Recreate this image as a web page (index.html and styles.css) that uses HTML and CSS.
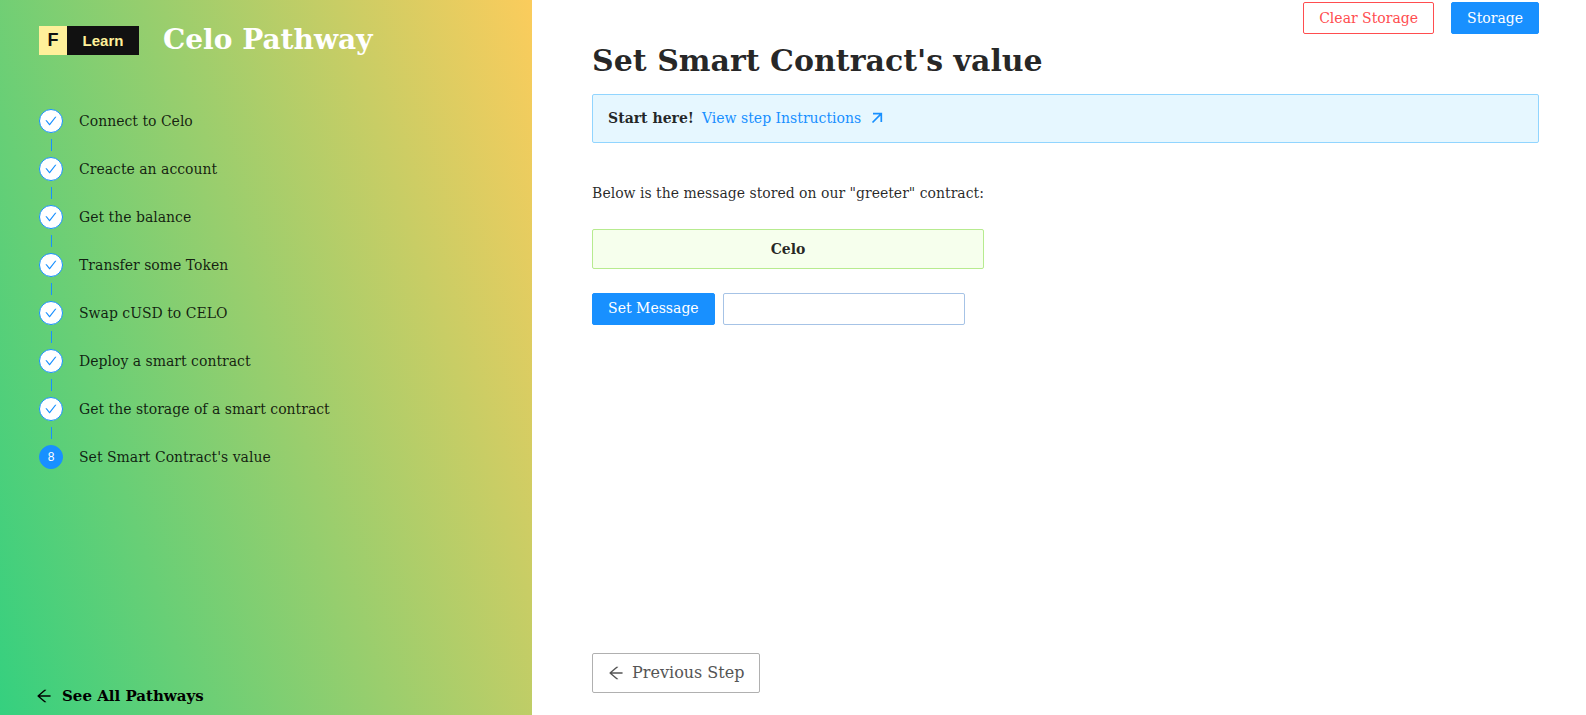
FILE: index.html
```html
<!DOCTYPE html>
<html lang="en">
<head>
<meta charset="utf-8">
<title>Celo Pathway</title>
<link rel="stylesheet" href="styles.css">
</head>
<body>
<svg class="sprite" aria-hidden="true">
  <symbol id="check" viewBox="64 64 896 896"><path d="M912 190h-69.900c-9.800 0-19.100 4.500-25.100 12.200L404.700 724.500 207 474a32 32 0 0 0-25.100-12.200H112c-6.700 0-10.400 7.700-6.300 12.900l273.900 347c12.800 16.200 37.400 16.200 50.300 0l488.400-618.900c4.100-5.100.4-12.800-6.300-12.800z"/></symbol>
  <symbol id="arrow-left" viewBox="64 64 896 896"><path d="M872 474H286.900l350.200-304c5.600-4.900 2.200-14-5.200-14h-88.500c-3.900 0-7.600 1.400-10.500 3.900L155 487.800a31.960 31.960 0 0 0 0 48.300L535.100 866c1.500 1.300 3.300 2 5.200 2h91.500c7.400 0 10.800-9.200 5.200-14L286.900 550H872c4.400 0 8-3.600 8-8v-60c0-4.400-3.600-8-8-8z"/></symbol>
  <symbol id="arrow-up-right" viewBox="0 0 14 14"><path d="M3 2.700H11.300V11M11.300 2.700L2.500 11.500" fill="none" stroke="currentColor" stroke-width="1.700"/></symbol>
</svg>
<div class="layout">
  <aside class="sidebar">
    <header class="brand">
      <div class="logo"><span class="logo-mark">F</span><span class="logo-word">Learn</span></div>
      <div class="brand-title">Celo Pathway</div>
    </header>
    <ol class="steps">
      <li class="step"><span class="step-icon"><svg class="check"><use href="#check"/></svg></span>Connect to Celo</li>
      <li class="step"><span class="step-icon"><svg class="check"><use href="#check"/></svg></span>Creacte an account</li>
      <li class="step"><span class="step-icon"><svg class="check"><use href="#check"/></svg></span>Get the balance</li>
      <li class="step"><span class="step-icon"><svg class="check"><use href="#check"/></svg></span>Transfer some Token</li>
      <li class="step"><span class="step-icon"><svg class="check"><use href="#check"/></svg></span>Swap cUSD to CELO</li>
      <li class="step"><span class="step-icon"><svg class="check"><use href="#check"/></svg></span>Deploy a smart contract</li>
      <li class="step"><span class="step-icon"><svg class="check"><use href="#check"/></svg></span>Get the storage of a smart contract</li>
      <li class="step" aria-current="step"><span class="step-icon step-icon-active">8</span>Set Smart Contract's value</li>
    </ol>
    <a class="all-pathways" href="#"><svg class="arrow"><use href="#arrow-left"/></svg>See All Pathways</a>
  </aside>
  <main class="content">
    <div class="toolbar">
      <button class="btn btn-danger" type="button">Clear Storage</button>
      <button class="btn btn-primary" type="button">Storage</button>
    </div>
    <h1 class="title">Set Smart Contract's value</h1>
    <div class="notice">
      <strong>Start here!</strong>
      <a class="notice-link" href="#">View step Instructions <svg class="link-icon"><use href="#arrow-up-right"/></svg></a>
    </div>
    <div class="greeting">
      <p class="greeting-text">Below is the message stored on our "greeter" contract:</p>
      <div class="greeting-value">Celo</div>
      <form class="message-form">
        <button class="btn btn-primary btn-submit" type="button">Set Message</button>
        <input class="message-input" type="text" aria-label="Message">
      </form>
    </div>
    <footer class="footer">
      <button class="btn btn-large" type="button"><svg class="arrow"><use href="#arrow-left"/></svg>Previous Step</button>
    </footer>
  </main>
</div>
</body>
</html>
```
FILE: styles.css
```css
* {
  box-sizing: border-box;
}

body {
  margin: 0;
  font-family: "DejaVu Serif", serif;
  font-size: 14px;
  line-height: 22px;
  color: rgba(0, 0, 0, 0.85);
  background: #fff;
}

.sprite {
  display: none;
}

.layout {
  display: flex;
  min-height: 100vh;
}

.sidebar {
  flex: 0 0 33.55%;
  display: flex;
  flex-direction: column;
  padding: 18px 36px 8px 39px;
  background: linear-gradient(72deg, #35d07f, #fbcc5c);
}

.brand {
  display: flex;
  align-items: center;
  gap: 24px;
}

.logo {
  display: flex;
  height: 29px;
  font-family: "Liberation Sans", Arial, sans-serif;
  font-size: 15px;
  font-weight: 700;
  line-height: 29px;
  text-align: center;
}

.logo-mark {
  width: 28px;
  color: #111;
  font-size: 18px;
  background: #fff09a;
}

.logo-word {
  width: 72px;
  color: #fff09a;
  background: #111;
}

.brand-title {
  font-size: 28px;
  font-weight: 700;
  line-height: 44px;
  color: #fff;
}

.steps {
  display: flex;
  flex-direction: column;
  gap: 24px;
  margin: 47px 0 0;
  padding: 0;
  list-style: none;
}

.step {
  position: relative;
  display: flex;
  align-items: center;
  gap: 16px;
  line-height: 24px;
}

.step:not(:last-child)::after {
  content: "";
  position: absolute;
  left: 12px;
  top: 30px;
  width: 1px;
  height: 12px;
  background: #1890ff;
}

.step-icon {
  display: flex;
  align-items: center;
  justify-content: center;
  width: 24px;
  height: 24px;
  border: 1px solid #1890ff;
  border-radius: 50%;
  background: #fff;
  color: #1890ff;
}

.step-icon-active {
  background: #1890ff;
  color: #fff;
  font-family: "Liberation Sans", Arial, sans-serif;
  font-size: 12px;
}

.check {
  width: 12px;
  height: 12px;
  fill: currentColor;
}

.all-pathways {
  display: flex;
  align-items: center;
  align-self: flex-start;
  gap: 10px;
  margin: auto 0 0 -3px;
  font-size: 15px;
  font-weight: 700;
  color: #000;
  text-decoration: none;
}

.arrow {
  width: 16px;
  height: 16px;
  fill: currentColor;
}

.content {
  flex: 1;
  min-width: 0;
  display: flex;
  flex-direction: column;
  padding: 2px 47px 22px 60px;
}

.toolbar {
  display: flex;
  justify-content: flex-end;
  gap: 17px;
}

.btn {
  height: 32px;
  padding: 0 15px;
  border: 1px solid #b0b0b0;
  border-radius: 2px;
  font: inherit;
  color: #555;
  background: #fff;
  cursor: pointer;
}

.btn-primary {
  border-color: #1890ff;
  color: #fff;
  background: #1890ff;
}

.btn-danger {
  border-color: #ff4d4f;
  color: #ff4d4f;
}

.btn-submit {
  padding-bottom: 2px;
}

.btn-large {
  display: flex;
  align-items: center;
  gap: 8px;
  height: 40px;
  font-size: 16px;
}

.title {
  margin: 8px 0 0;
  font-size: 30px;
  line-height: 38px;
}

.notice {
  display: flex;
  gap: 8px;
  margin-top: 14px;
  padding: 12px 15px 13px;
  border: 1px solid #91d5ff;
  border-radius: 2px;
  background: #e6f7ff;
}

.notice-link {
  display: flex;
  align-items: center;
  gap: 9px;
  color: #1890ff;
  text-decoration: none;
}

.link-icon {
  width: 14px;
  height: 14px;
}

.greeting {
  align-self: flex-start;
  margin-top: 39px;
}

.greeting-text {
  margin: 0;
}

.greeting-value {
  margin-top: 25px;
  padding: 8px;
  border: 1px solid #b7eb8f;
  border-radius: 2px;
  font-weight: 700;
  text-align: center;
  background: #f6ffed;
}

.message-form {
  display: flex;
  gap: 8px;
  margin-top: 24px;
}

.message-input {
  width: 242px;
  height: 32px;
  padding: 4px 11px;
  border: 1px solid #a6c3e6;
  border-radius: 2px;
  font: inherit;
}

.footer {
  display: flex;
  margin-top: auto;
}
```
